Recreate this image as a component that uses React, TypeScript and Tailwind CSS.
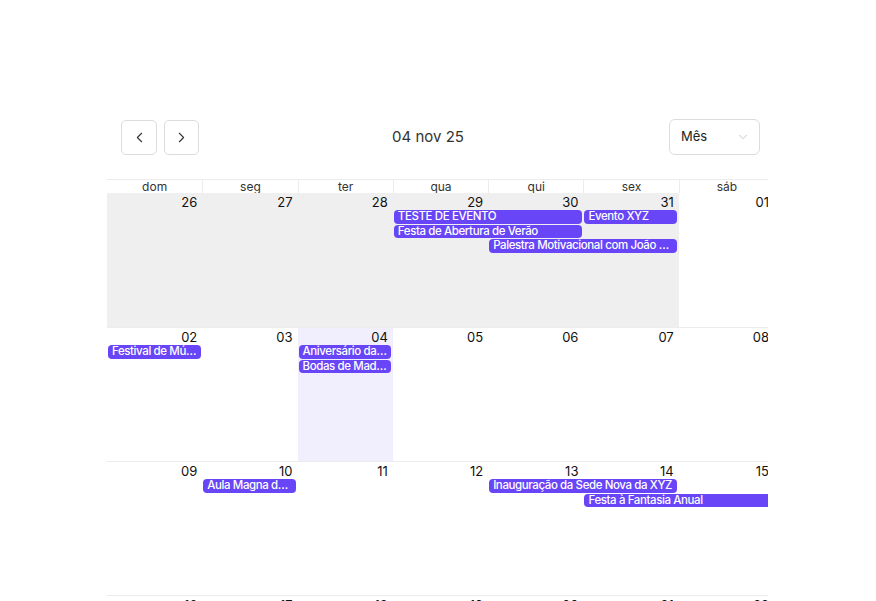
import React from "react";
import { ChevronLeft, ChevronRight, ChevronDown } from "lucide-react";

type Ev = { title: string; col: string; row: string; openEnd?: boolean };
type Day = { n: string; bg: string };

const weekdays = ["dom", "seg", "ter", "qua", "qui", "sex", "sáb"];

const OFF = "bg-[#efefef]";
const TODAY = "bg-[#f1effd]";
const NONE = "bg-white";

const weeks: { days: Day[]; events: Ev[] }[] = [
  {
    days: [
      { n: "26", bg: OFF },
      { n: "27", bg: OFF },
      { n: "28", bg: OFF },
      { n: "29", bg: OFF },
      { n: "30", bg: OFF },
      { n: "31", bg: OFF },
      { n: "01", bg: NONE },
    ],
    events: [
      { title: "TESTE DE EVENTO", col: "col-start-4 col-span-2", row: "row-start-2" },
      { title: "Evento XYZ", col: "col-start-6 col-span-1", row: "row-start-2" },
      { title: "Festa de Abertura de Verão", col: "col-start-4 col-span-2", row: "row-start-3" },
      { title: "Palestra Motivacional com João Silva", col: "col-start-5 col-span-2", row: "row-start-4" },
    ],
  },
  {
    days: [
      { n: "02", bg: NONE },
      { n: "03", bg: NONE },
      { n: "04", bg: TODAY },
      { n: "05", bg: NONE },
      { n: "06", bg: NONE },
      { n: "07", bg: NONE },
      { n: "08", bg: NONE },
    ],
    events: [
      { title: "Festival de Música", col: "col-start-1 col-span-1", row: "row-start-2" },
      { title: "Aniversário da Empresa", col: "col-start-3 col-span-1", row: "row-start-2" },
      { title: "Bodas de Madeira", col: "col-start-3 col-span-1", row: "row-start-3" },
    ],
  },
  {
    days: [
      { n: "09", bg: NONE },
      { n: "10", bg: NONE },
      { n: "11", bg: NONE },
      { n: "12", bg: NONE },
      { n: "13", bg: NONE },
      { n: "14", bg: NONE },
      { n: "15", bg: NONE },
    ],
    events: [
      { title: "Aula Magna de Abertura", col: "col-start-2 col-span-1", row: "row-start-2" },
      { title: "Inauguração da Sede Nova da XYZ", col: "col-start-5 col-span-2", row: "row-start-2" },
      { title: "Festa à Fantasia Anual", col: "col-start-6 col-span-2", row: "row-start-3", openEnd: true },
    ],
  },
  {
    days: [
      { n: "16", bg: NONE },
      { n: "17", bg: NONE },
      { n: "18", bg: NONE },
      { n: "19", bg: NONE },
      { n: "20", bg: NONE },
      { n: "21", bg: NONE },
      { n: "22", bg: NONE },
    ],
    events: [],
  },
];

const bgCols = [
  "col-start-1",
  "col-start-2",
  "col-start-3",
  "col-start-4",
  "col-start-5",
  "col-start-6",
  "col-start-7",
];

function Week({ days, events, first }: { days: Day[]; events: Ev[]; first: boolean }) {
  return (
    <div
      className={`grid h-[134px] grid-cols-7 grid-rows-[17px_14.5px_14.5px_14.5px_1fr] ${
        first ? "" : "border-t border-[#ececec]"
      }`}
    >
      {days.map((d, i) => (
        <div
          key={d.n}
          className={`${bgCols[i]} row-start-1 row-span-5 ${d.bg} flex justify-end pr-[5px] pt-[1px] text-[13px] leading-[17px] text-[#111]`}
        >
          {d.n}
        </div>
      ))}
      {events.map((e) => (
        <div
          key={e.title}
          className={`${e.col} ${e.row} z-10 ml-[1px] h-[13.5px] overflow-hidden truncate bg-[#6845f6] px-[4px] text-[11.5px] font-medium leading-[13.5px] tracking-[-0.4px] text-white ${
            e.openEnd ? "rounded-l-[4px]" : "mr-[1.5px] rounded-[4px]"
          }`}
        >
          {e.title}
        </div>
      ))}
    </div>
  );
}

export default function App() {
  return (
    <div className="h-[601px] w-[876px] overflow-hidden bg-white font-['Inter',sans-serif] text-[#222]">
      <div className="ml-[107px] mt-[119px] w-[661px] overflow-hidden">
        <div className="w-[667px]">
          {/* toolbar */}
          <div className="flex h-[36px] items-center justify-between px-[14px]">
            <div className="flex gap-[7px]">
              <button className="flex h-[35px] w-[36px] items-center justify-center rounded-[5px] border border-[#dcdcdc] bg-white">
                <ChevronLeft size={17} strokeWidth={1.5} color="#333" />
              </button>
              <button className="flex h-[35px] w-[35px] items-center justify-center rounded-[5px] border border-[#dcdcdc] bg-white">
                <ChevronRight size={17} strokeWidth={1.5} color="#333" />
              </button>
            </div>
            <div className="-translate-x-[6px] text-[15px] text-[#333]">04 nov 25</div>
            <div className="flex h-[36px] w-[91px] items-center justify-between rounded-[6px] border border-[#dcdcdc] bg-white pl-[11px] pr-[9px]">
              <span className="text-[13px] text-[#222]">Mês</span>
              <ChevronDown size={14} strokeWidth={1.4} color="#bdbdbd" />
            </div>
          </div>

          {/* weekday header */}
          <div className="mt-[24px] grid h-[14px] grid-cols-7 border-t border-[#ececec]">
            {weekdays.map((w, i) => (
              <div
                key={w}
                className={`text-center text-[12px] leading-[13px] text-[#333] ${
                  i > 0 ? "border-l border-[#ececec]" : ""
                }`}
              >
                {w}
              </div>
            ))}
          </div>

          {weeks.map((w, i) => (
            <Week key={i} days={w.days} events={w.events} first={i === 0} />
          ))}
        </div>
      </div>
    </div>
  );
}
